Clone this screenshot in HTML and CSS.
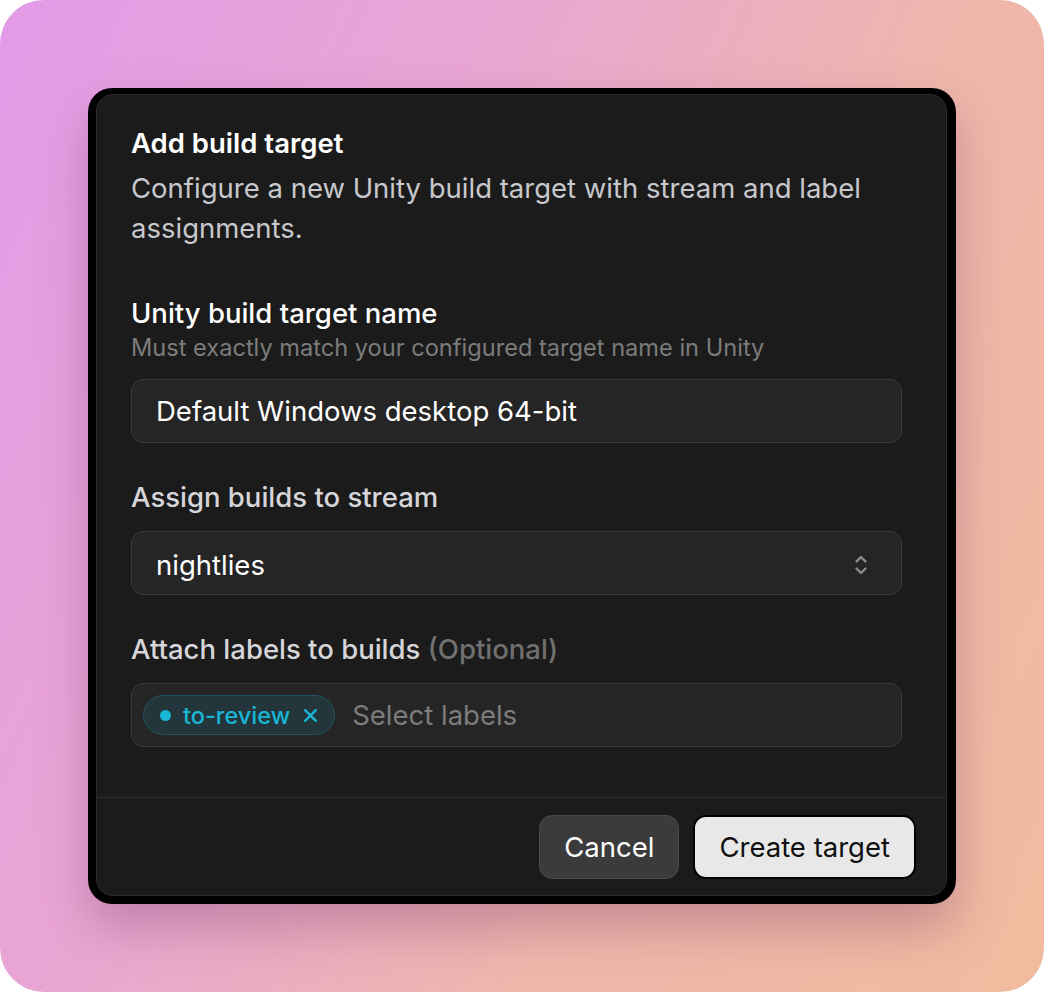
FILE: index.html
```html
<!DOCTYPE html>
<html lang="en">
<head>
  <meta charset="UTF-8">
  <meta name="viewport" content="width=device-width, initial-scale=1.0">
  <title>Add build target</title>
  <link rel="stylesheet" href="styles.css">
</head>
<body>
  <div class="backdrop">
    <div class="dialog-frame">
      <div class="dialog" role="dialog" aria-labelledby="dialog-title">
        <div class="dialog__body">
          <h2 class="dialog__title" id="dialog-title">Add build target</h2>
          <p class="dialog__desc">Configure a new Unity build target with stream and label assignments.</p>

          <div class="field">
            <label class="field__label field__label--strong" for="target-name">Unity build target name</label>
            <div class="field__hint">Must exactly match your configured target name in Unity</div>
            <input class="input" id="target-name" type="text" value="Default Windows desktop 64-bit">
          </div>

          <div class="field">
            <label class="field__label">Assign builds to stream</label>
            <div class="input select">
              <span>nightlies</span>
              <svg class="select__icon" width="16" height="24" viewBox="0 0 16 24" fill="none" stroke="currentColor" stroke-width="2.4" stroke-linecap="round" stroke-linejoin="round">
                <path d="M3.5 8.5 8 4l4.5 4.5"/>
                <path d="M3.5 15.5 8 20l4.5-4.5"/>
              </svg>
            </div>
          </div>

          <div class="field">
            <label class="field__label">Attach labels to builds <span class="field__optional">(Optional)</span></label>
            <div class="input multi">
              <span class="chip">
                <span class="chip__dot"></span>
                to-review
                <svg class="chip__remove" width="15" height="15" viewBox="0 0 14 14" fill="none" stroke="currentColor" stroke-width="2.2" stroke-linecap="round">
                  <path d="M2 2l10 10M12 2 2 12"/>
                </svg>
              </span>
              <span class="multi__placeholder">Select labels</span>
            </div>
          </div>
        </div>

        <div class="dialog__footer">
          <button class="btn btn--secondary">Cancel</button>
          <button class="btn btn--primary">Create target</button>
        </div>
      </div>
    </div>
  </div>
</body>
</html>
```

FILE: styles.css
```css
html, body {
  margin: 0;
  background-color: #ffffff;
}

body {
  font-family: Inter, "Noto Sans", sans-serif;
}

.backdrop {
  width: 1044px;
  height: 992px;
  border-radius: 44px;
  background: linear-gradient(115deg, #e39be8 0%, #e9a6d2 35%, #efb6ab 65%, #f0bb9e 100%);
  display: flex;
  align-items: flex-start;
  justify-content: center;
  padding-top: 88px;
  box-sizing: border-box;
}

.dialog-frame {
  background-color: #000000;
  border-radius: 24px;
  padding: 6px 9px 8px 8px;
  box-shadow: 0 24px 48px rgba(120, 60, 110, 0.35);
}

.dialog {
  width: 849px;
  height: 800px;
  background-color: #1b1b1b;
  border: 1px solid #2c2c2c;
  border-radius: 17px;
  display: flex;
  flex-direction: column;
}

.dialog__body {
  flex: 1;
  padding: 28px 44px 0 34px;
}

.dialog__title {
  margin: 0;
  font-size: 27.5px;
  font-weight: 600;
  line-height: 40px;
  color: #ffffff;
}

.dialog__desc {
  margin: 5px 0 0;
  font-size: 27.5px;
  line-height: 40px;
  color: #c8c8cc;
}

.field {
  margin-top: 47px;
}

.field + .field {
  margin-top: 36px;
}

.field__label {
  display: block;
  font-size: 27.5px;
  font-weight: 500;
  line-height: 36px;
  color: #d6d6da;
}

.field__label--strong {
  color: #ffffff;
}

.field__optional {
  color: #707070;
}

.field__hint {
  font-size: 23.6px;
  line-height: 34px;
  color: #7c7c7c;
}

.input {
  display: flex;
  align-items: center;
  box-sizing: border-box;
  width: 100%;
  height: 64px;
  margin-top: 16px;
  padding: 0 24px;
  background-color: #252525;
  border: 1px solid #3a3a3a;
  border-radius: 12px;
  font-family: inherit;
  font-size: 27.5px;
  color: #ffffff;
  outline: none;
}

.field__hint + .input {
  margin-top: 14px;
}

.select {
  justify-content: space-between;
  padding-top: 3px;
}

.select__icon {
  color: #8e8e8e;
  margin-right: 8px;
}

.multi {
  padding-left: 11px;
  gap: 17px;
}

.chip {
  display: inline-flex;
  align-items: center;
  gap: 10px;
  height: 40px;
  padding: 0 16px;
  box-sizing: border-box;
  background-color: #22363b;
  border: 1px solid #1d5561;
  border-radius: 20px;
  font-size: 23.5px;
  font-weight: 500;
  color: #19b6d6;
}

.chip__dot {
  width: 11px;
  height: 11px;
  border-radius: 50%;
  background-color: #19b6d6;
  margin-right: 2px;
}

.chip__remove {
  margin-left: 3px;
}

.multi__placeholder {
  color: #7c7c7c;
}

.dialog__footer {
  display: flex;
  justify-content: flex-end;
  gap: 14px;
  padding: 17px 30px 16px;
  border-top: 1px solid #2e2e2e;
}

.btn {
  height: 64px;
  padding: 0 24px;
  border-radius: 13px;
  font-family: inherit;
  font-size: 27.5px;
  font-weight: 400;
  cursor: pointer;
}

.btn--secondary {
  background-color: #3b3b3b;
  border: 1px solid #4a4a4a;
  color: #ffffff;
}

.btn--primary {
  background-color: #e8e8e8;
  border: 2px solid #000000;
  color: #111111;
}
```
